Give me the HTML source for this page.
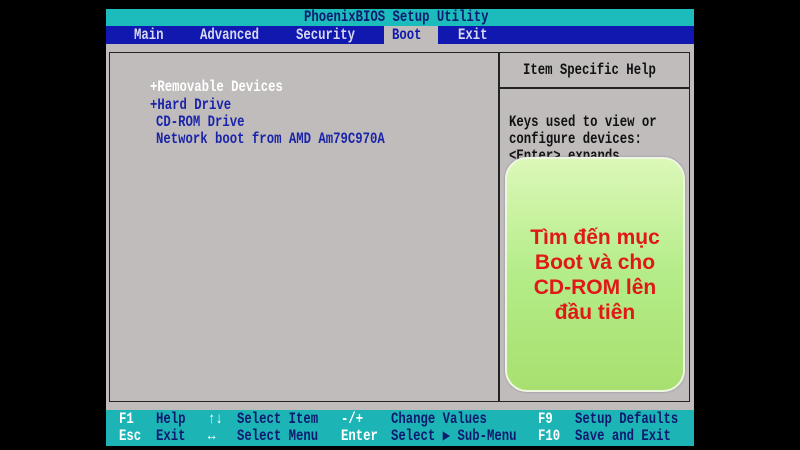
<!DOCTYPE html>
<html><head><meta charset="utf-8"><style>
*{margin:0;padding:0;box-sizing:border-box}
body{width:800px;height:450px;background:#000;position:relative;overflow:hidden;font-family:"Liberation Mono",monospace;font-size:12.3px;font-weight:bold}
.a{position:absolute;white-space:pre;line-height:14px;transform:scaleY(1.25);transform-origin:0 50%}
.w{color:#fff}.b{color:#1a24a8}.d{color:#0e1a70}
</style></head><body>
<div style="position:absolute;left:106px;top:9px;width:588px;height:17px;background:#1cbcbc"></div>
<div style="position:absolute;left:106px;top:26px;width:588px;height:18px;background:#1018b0"></div>
<div style="position:absolute;left:384px;top:26px;width:54px;height:18px;background:#c0bcbc"></div>
<div style="position:absolute;left:106px;top:44px;width:588px;height:366px;background:#c0bcbc"></div>
<div style="position:absolute;left:109px;top:52px;width:581px;height:350px;border:1.5px solid #222"></div>
<div style="position:absolute;left:498px;top:52px;width:1.5px;height:350px;background:#222"></div>
<div style="position:absolute;left:498px;top:87px;width:192px;height:1.5px;background:#222"></div>
<div style="position:absolute;left:106px;top:410px;width:588px;height:36px;background:#1cb4b4"></div>

<div class="a d" style="left:304px;top:10px">PhoenixBIOS Setup Utility</div>
<div class="a" style="left:134px;top:28px;color:#d8d8f0">Main</div>
<div class="a" style="left:200px;top:28px;color:#d8d8f0">Advanced</div>
<div class="a" style="left:296px;top:28px;color:#d8d8f0">Security</div>
<div class="a" style="left:392px;top:28px;color:#1018b0">Boot</div>
<div class="a" style="left:458px;top:28px;color:#d8d8f0">Exit</div>

<div class="a w" style="left:150px;top:80px">+Removable Devices</div>
<div class="a b" style="left:150px;top:98px">+Hard Drive</div>
<div class="a b" style="left:156px;top:115px">CD-ROM Drive</div>
<div class="a b" style="left:156px;top:132px">Network boot from AMD Am79C970A</div>

<div class="a" style="left:523px;top:63px;color:#111">Item Specific Help</div>
<div class="a" style="left:509px;top:115px;color:#111">Keys used to view or</div>
<div class="a" style="left:509px;top:132px;color:#111">configure devices:</div>
<div class="a" style="left:509px;top:149px;color:#111">&lt;Enter&gt; expands</div>

<div style="position:absolute;left:505px;top:157px;width:180px;height:235px;border-radius:22px;background:linear-gradient(#dcf8b8,#b4ec88 50%,#a8e070);border:2px solid #eef8e0;box-shadow:0 0 2px #889"></div>
<div style="position:absolute;left:505px;top:225px;width:180px;text-align:center;font-family:'Liberation Sans',sans-serif;font-weight:bold;font-size:21px;line-height:25px;color:#e01818">Tìm đến mục<br>Boot và cho<br>CD-ROM lên<br>đầu tiên</div>

<div class="a w" style="left:119px;top:412px">F1</div><div class="a d" style="left:156px;top:412px">Help</div>
<div class="a w" style="left:208px;top:412px">↑↓</div><div class="a d" style="left:237px;top:412px">Select Item</div>
<div class="a w" style="left:341px;top:412px">-/+</div><div class="a d" style="left:391px;top:412px">Change Values</div>
<div class="a w" style="left:538px;top:412px">F9</div><div class="a d" style="left:575px;top:412px">Setup Defaults</div>
<div class="a w" style="left:119px;top:429px">Esc</div><div class="a d" style="left:156px;top:429px">Exit</div>
<div class="a w" style="left:208px;top:429px">↔</div><div class="a d" style="left:237px;top:429px">Select Menu</div>
<div class="a w" style="left:341px;top:429px">Enter</div><div class="a d" style="left:391px;top:429px">Select ▶ Sub-Menu</div>
<div class="a w" style="left:538px;top:429px">F10</div><div class="a d" style="left:575px;top:429px">Save and Exit</div>
</body></html>
